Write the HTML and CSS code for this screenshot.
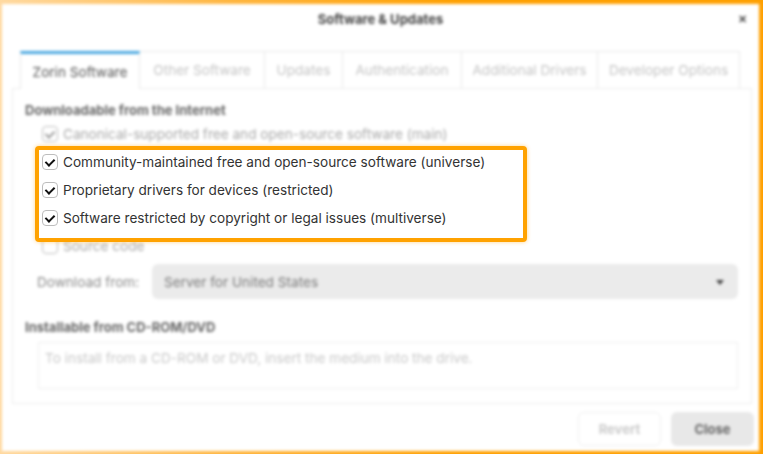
FILE: index.html
```html
<!DOCTYPE html>
<html>
<head>
  <title>Software &amp; Updates</title>
  <link rel="stylesheet" href="styles.css">
</head>
<body>
  <div class="frame">
    <div class="window">
      <div class="titlebar">
        <span></span>
        <span class="title">Software &amp; Updates</span>
        <span class="close">&#10005;</span>
      </div>

      <div class="notebook">
        <div class="tabs">
          <div class="tab active" style="width:120px">Zorin Software</div>
          <div class="tab" style="width:125px">Other Software</div>
          <div class="tab" style="width:78px">Updates</div>
          <div class="tab" style="width:119px">Authentication</div>
          <div class="tab" style="width:136px">Additional Drivers</div>
          <div class="tab" style="width:142px">Developer Options</div>
        </div>
        <div class="panel">
          <div class="heading">Downloadable from the Internet</div>
          <div class="row dim"><span class="box checked grey"></span>Canonical-supported free and open-source software (main)</div>
          <div class="row"><span class="box checked"></span>Community-maintained free and open-source software (universe)</div>
          <div class="row"><span class="box checked"></span>Proprietary drivers for devices (restricted)</div>
          <div class="row"><span class="box checked"></span>Software restricted by copyright or legal issues (multiverse)</div>
          <div class="row dim"><span class="box"></span>Source code</div>

          <div class="download">
            <span class="label">Download from:</span>
            <div class="combo">
              <span>Server for United States</span>
              <span class="arrow"></span>
            </div>
          </div>

          <div class="heading cd">Installable from CD-ROM/DVD</div>
          <div class="cdbox">To install from a CD-ROM or DVD, insert the medium into the drive.</div>
        </div>
      </div>

      <div class="buttons">
        <div class="btn revert">Revert</div>
        <div class="btn close-btn">Close</div>
      </div>
    </div>

    <!-- highlighted part, drawn sharp over the blurred window -->
    <div class="highlight">
      <div class="row"><span class="box checked"></span>Community-maintained free and open-source software (universe)</div>
      <div class="row"><span class="box checked"></span>Proprietary drivers for devices (restricted)</div>
      <div class="row"><span class="box checked"></span>Software restricted by copyright or legal issues (multiverse)</div>
    </div>
  </div>
</body>
</html>
```

FILE: styles.css
```css
body {
  margin: 0;
  font-family: Inter, "Noto Sans", sans-serif;
  font-size: 13.6px;
  color: #333;
}
.frame {
  position: relative;
  width: 763px;
  height: 454px;
  box-sizing: border-box;
  padding: 4px 4px 3px 2px;
  background: linear-gradient(90deg, #ffd9a0 0%, #ffb640 30%, #ffa000 60%);
}
.window {
  height: 100%;
  background: #fff;
  filter: blur(1.4px);
  display: flex;
  flex-direction: column;
}
.titlebar {
  height: 30px;
  display: grid;
  grid-template-columns: 1fr auto 1fr;
  align-items: center;
}
.title {
  font-weight: bold;
  font-size: 13px;
  color: #444;
}
.close {
  justify-self: end;
  margin-right: 12px;
  font-size: 11px;
  font-weight: bold;
  color: #444;
}
.notebook {
  margin: 17px 7px 0 10px;
}
.tabs {
  display: flex;
  padding-left: 8px;
  height: 37px;
}
.tab {
  box-sizing: border-box;
  border: 1px solid #e8e8e8;
  border-left: none;
  border-bottom: none;
  display: flex;
  align-items: center;
  justify-content: center;
  color: #c4c4c4;
  background: #fff;
}
.tab.active {
  border-left: 1px solid #e8e8e8;
  border-top: 3px solid #4aa8e0;
  color: #555;
  position: relative;
  z-index: 1;
  margin-bottom: -1px;
  height: 38px;
}
.panel {
  border: 1px solid #ececec;
  height: 316px;
  box-sizing: border-box;
  padding: 13px 13px 0 12px;
}
.heading {
  font-weight: bold;
  font-size: 13px;
  color: #666;
  line-height: 16px;
  margin-bottom: 2px;
}
.row {
  height: 28px;
  display: flex;
  align-items: center;
  padding-left: 17px;
  color: #333;
}
.panel .row {
  color: #666;
}
.panel .row.dim {
  color: #a8a8a8;
}
.box {
  width: 16px;
  height: 16px;
  box-sizing: border-box;
  border: 1px solid #bdbdbd;
  border-radius: 4px;
  margin-right: 5px;
  position: relative;
  background: #fff;
}
.box.checked::after {
  content: "";
  position: absolute;
  left: 4px;
  top: 1.5px;
  width: 4px;
  height: 7px;
  border: solid #111;
  border-width: 0 2.2px 2.2px 0;
  transform: rotate(45deg);
}
.box.grey::after {
  border-color: #999;
}
.download {
  display: flex;
  align-items: center;
  margin-top: 4px;
  padding-left: 12px;
}
.label {
  width: 115px;
  color: #8a8a8a;
}
.combo {
  flex: 1;
  height: 35px;
  background: #ebebeb;
  border-radius: 6px;
  display: flex;
  align-items: center;
  justify-content: space-between;
  padding: 0 14px 0 12px;
  color: #7a7a7a;
}
.arrow {
  border: 4px solid transparent;
  border-top: 5px solid #444;
  margin-top: 5px;
}
.heading.cd {
  margin-top: 20px;
}
.cdbox {
  margin: 7px 0 0 13px;
  height: 47px;
  box-sizing: border-box;
  border: 1px solid #eee;
  padding: 7px 6px;
  color: #c8c8c8;
}
.buttons {
  display: flex;
  justify-content: flex-end;
  gap: 10px;
  margin: 8px 5px 0 0;
}
.btn {
  width: 83px;
  height: 34px;
  box-sizing: border-box;
  border-radius: 6px;
  display: flex;
  align-items: center;
  justify-content: center;
  font-weight: bold;
  font-size: 13px;
}
.revert {
  border: 1px solid #eee;
  color: #cacaca;
}
.close-btn {
  background: #e8e8e8;
  color: #666;
}
.highlight {
  position: absolute;
  left: 35px;
  top: 146px;
  width: 492px;
  height: 96px;
  box-sizing: border-box;
  border: 4px solid #ffa200;
  border-radius: 4px;
  background: #fff;
  box-shadow: 0 0 4px rgba(255, 162, 0, 0.45);
}
.highlight .row {
  padding-left: 3px;
}
.highlight .row:first-child {
  margin-top: -2px;
}
```
